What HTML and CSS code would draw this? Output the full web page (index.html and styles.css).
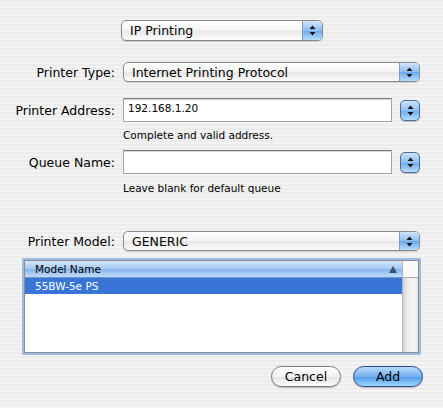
FILE: index.html
```html
<!DOCTYPE html>
<html lang="en">
<head>
    <meta charset="UTF-8">
    <title>Add Printer</title>
    <link rel="stylesheet" href="styles.css">
</head>
<body>
    <div class="sheet">
        <div class="top">
            <div class="popup popup-top">
                <span class="popup-text">IP Printing</span>
                <span class="popup-arrows">
                    <svg width="7" height="11" viewBox="0 0 7 11"><path d="M3.5 0.5 L6.5 4 L0.5 4 Z M0.5 7 L6.5 7 L3.5 10.5 Z" fill="#111"/></svg>
                </span>
            </div>
        </div>

        <div class="row row-type">
            <label class="label">Printer Type:</label>
            <div class="popup">
                <span class="popup-text">Internet Printing Protocol</span>
                <span class="popup-arrows">
                    <svg width="7" height="11" viewBox="0 0 7 11"><path d="M3.5 0.5 L6.5 4 L0.5 4 Z M0.5 7 L6.5 7 L3.5 10.5 Z" fill="#111"/></svg>
                </span>
            </div>
        </div>

        <div class="row row-addr">
            <label class="label">Printer Address:</label>
            <div class="field">192.168.1.20</div>
            <div class="stepper">
                <svg width="7" height="11" viewBox="0 0 7 11"><path d="M3.5 0.5 L6.5 4 L0.5 4 Z M0.5 7 L6.5 7 L3.5 10.5 Z" fill="#111"/></svg>
            </div>
        </div>
        <div class="hint">Complete and valid address.</div>

        <div class="row row-queue">
            <label class="label">Queue Name:</label>
            <div class="field"></div>
            <div class="stepper">
                <svg width="7" height="11" viewBox="0 0 7 11"><path d="M3.5 0.5 L6.5 4 L0.5 4 Z M0.5 7 L6.5 7 L3.5 10.5 Z" fill="#111"/></svg>
            </div>
        </div>
        <div class="hint">Leave blank for default queue</div>

        <div class="row row-model">
            <label class="label">Printer Model:</label>
            <div class="popup">
                <span class="popup-text">GENERIC</span>
                <span class="popup-arrows">
                    <svg width="7" height="11" viewBox="0 0 7 11"><path d="M3.5 0.5 L6.5 4 L0.5 4 Z M0.5 7 L6.5 7 L3.5 10.5 Z" fill="#111"/></svg>
                </span>
            </div>
        </div>

        <div class="list">
            <div class="list-main">
                <div class="list-header">
                    <span>Model Name</span>
                    <svg width="8" height="7" viewBox="0 0 8 7"><path d="M4 0 L8 7 L0 7 Z" fill="#3c4f6b"/></svg>
                </div>
                <div class="list-row selected">55BW-5e PS</div>
            </div>
            <div class="list-scroll">
                <div class="scroll-corner"></div>
                <div class="scroll-track"></div>
            </div>
        </div>

        <div class="buttons">
            <button type="button" class="btn">Cancel</button>
            <button type="button" class="btn btn-default">Add</button>
        </div>
    </div>
</body>
</html>
```

FILE: styles.css
```css
/* aqua sheet */
body {
    margin: 0;
    font-family: "DejaVu Sans", sans-serif;
    font-size: 12.5px;
    color: #000;
    background: repeating-linear-gradient(#ececec 0, #ececec 2px, #f3f3f3 2px, #f3f3f3 4px);
}
.sheet {
    width: 443px;
    height: 408px;
    padding-top: 20px;
    box-sizing: border-box;
}
.top {
    display: flex;
    justify-content: center;
}
.row {
    display: flex;
    align-items: center;
}
.label {
    width: 115px;
    margin-right: 8px;
    text-align: right;
    flex-shrink: 0;
}

/* popup menus */
.popup {
    display: flex;
    align-items: center;
    width: 297px;
    height: 20px;
    box-sizing: border-box;
    border: 1px solid #8a8a8a;
    border-radius: 5px;
    background: linear-gradient(#ffffff, #f4f4f4 50%, #e6e6e6 51%, #fcfcfc);
    box-shadow: 0 1px 1px rgba(0, 0, 0, 0.15);
    overflow: hidden;
}
.popup-top {
    width: 202px;
    height: 21px;
    margin-left: 1px;
}
.popup-text {
    flex: 1;
    padding-left: 8px;
    white-space: nowrap;
}
.popup-arrows {
    width: 19px;
    height: 100%;
    display: flex;
    align-items: center;
    justify-content: center;
    border-left: 1px solid #7e9cc8;
    background: linear-gradient(#d2e6fb, #8dbdf1 50%, #6aa8ec 51%, #b5dcfd);
}

/* text fields */
.field {
    width: 269px;
    height: 24px;
    box-sizing: border-box;
    border: 1px solid #a5a5a5;
    border-top-color: #7d7d7d;
    background: #fff;
    box-shadow: inset 0 1px 0 #d6d6d6;
    font-size: 10.5px;
    padding: 3px 0 0 4px;
}
.stepper {
    width: 20px;
    height: 21px;
    margin-left: 8px;
    box-sizing: border-box;
    border: 1px solid #4d6d9c;
    border-radius: 5px;
    background: linear-gradient(#cfe4fb, #8fbef1 50%, #6ba9ec 51%, #b7ddfd);
    box-shadow: 0 1px 1px rgba(0, 0, 0, 0.2);
    display: flex;
    align-items: center;
    justify-content: center;
}
.hint {
    margin-left: 123px;
    font-size: 10.5px;
    line-height: 14px;
}

.row-type { margin-top: 21px; }
.row-addr { margin-top: 16px; }
.row-addr + .hint { margin-top: 6px; }
.row-queue { margin-top: 8px; }
.row-queue + .hint { margin-top: 7px; }
.row-model { margin-top: 36px; }

/* model list */
.list {
    display: flex;
    margin: 9px 0 0 24px;
    width: 395px;
    height: 93px;
    box-sizing: border-box;
    border: 1px solid #8c8c8c;
    box-shadow: 0 0 0 2px #9dbde6;
    background: #fff;
}
.list-main {
    flex: 1;
}
.list-header {
    height: 16px;
    display: flex;
    align-items: center;
    justify-content: space-between;
    padding: 0 5px 0 10px;
    font-size: 10.5px;
    border-bottom: 1px solid #6f95c7;
    background: linear-gradient(#d6e7fb, #a3c7f2 50%, #86b5ee 51%, #c2dcf8);
}
.list-row {
    height: 16px;
    line-height: 16px;
    padding-left: 10px;
    font-size: 10.5px;
}
.list-row.selected {
    background: #3875d7;
    color: #fff;
}
.list-scroll {
    width: 15px;
    display: flex;
    flex-direction: column;
    border-left: 1px solid #b5b5b5;
}
.scroll-corner {
    height: 16px;
    border-bottom: 1px solid #a8a8a8;
    background: #fafafa;
}
.scroll-track {
    flex: 1;
    background: linear-gradient(to right, #d2d2d2, #ececec 30%, #f6f6f6 70%, #e8e8e8);
}

/* buttons */
.buttons {
    display: flex;
    justify-content: flex-end;
    gap: 12px;
    margin: 13px 20px 0 0;
}
.btn {
    width: 70px;
    height: 21px;
    border: 1px solid #7a7a7a;
    border-radius: 11px;
    font-family: "DejaVu Sans", sans-serif;
    font-size: 12.5px;
    color: #000;
    padding: 0;
    background: linear-gradient(#ffffff, #f2f2f2 50%, #e2e2e2 51%, #fdfdfd);
    box-shadow: 0 1px 1px rgba(0, 0, 0, 0.25);
}
.btn-default {
    border-color: #2c4a8e;
    background: linear-gradient(#b9d9fa, #75b0f0 50%, #4f98ea 51%, #9fd9ff);
}
```
